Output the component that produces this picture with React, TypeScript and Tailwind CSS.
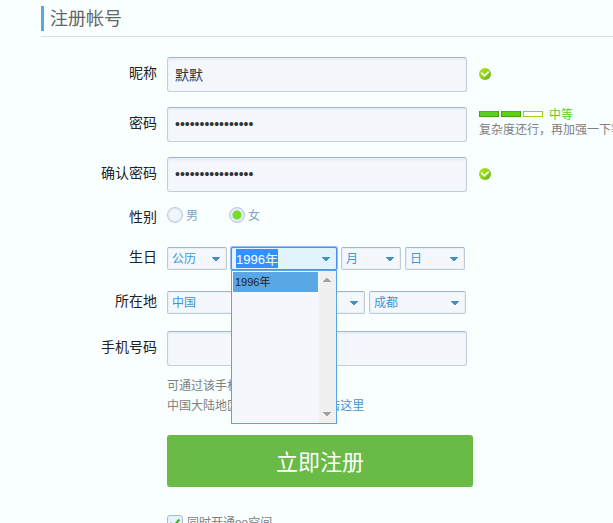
import { useEffect, useRef, useState } from "react";
import type { ReactNode } from "react";

const fieldClass =
    "h-[35px] w-[300px] shrink-0 rounded-[3px] border border-[#c0ced8] border-t-[#a3b6c6] bg-[#f4f8fd] px-[7px] pb-0.5 text-sm text-[#333] shadow-[inset_0_2px_2px_#e6edf3] outline-none";

function Row({ label, htmlFor, className, children }: { label: string; htmlFor?: string; className: string; children: ReactNode }) {
    return (
        <div className={`flex items-center ${className}`}>
            <label htmlFor={htmlFor} className="mr-2.5 w-[157px] shrink-0 pb-1 text-right text-sm leading-5 text-[#222]">{label}</label>
            {children}
        </div>
    );
}

function Caret({ className }: { className: string }) {
    return (
        <svg viewBox="0 0 8 4" className={`pointer-events-none absolute h-1 w-2 ${className}`} fill="currentColor" aria-hidden="true">
            <path d="M0 0h8v1H7v1H6v1H5v1H3V3H2V2H1V1H0z" />
        </svg>
    );
}

function Dropdown({ name, options, className }: { name: string; options: string[]; className: string }) {
    return (
        <div className={`relative h-[23px] ${className}`}>
            <select
                aria-label={name}
                className="block h-full w-full appearance-none rounded-[2px] border border-[#bccbd6] border-t-[#a3b3c6] bg-[#f4f8fd] pl-1 text-xs text-[#3f95d3] shadow-[inset_0_0_0_1px_#e9f0f5] outline-none"
            >
                {options.map((o) => <option key={o}>{o}</option>)}
            </select>
            <Caret className="right-[7px] top-2.5 text-[#3d91c8]" />
        </div>
    );
}

function YearBox() {
    const ref = useRef<HTMLInputElement>(null);
    const [year, setYear] = useState("1996年");

    useEffect(() => {
        ref.current?.focus();
        ref.current?.select();
    }, []);

    return (
        <div className="relative h-[23px] w-[106px]">
            <input
                ref={ref}
                role="combobox"
                aria-label="年"
                aria-expanded="true"
                aria-controls="year-list"
                value={year}
                onChange={(e) => setYear(e.target.value)}
                className="block h-full w-full rounded-[2px] border border-[#4b93f0] bg-[#e2f3fb] pl-1 text-[13px] text-[#3f95d3] shadow-[0_0_0_1px_#8fbcf8] outline-none selection:bg-[#3390ff] selection:text-white"
            />
            <Caret className="right-[7px] top-2.5 text-[#3d91c8]" />
            <div className="absolute left-0 top-full z-10 flex h-[154px] w-full border border-[#57a6e3] bg-[#f4f8fd]">
                <ul id="year-list" role="listbox" aria-label="年" className="grow p-px">
                    <li role="option" aria-selected="true" className="h-5 bg-[#59a7e4] pl-0.5 text-[11px] leading-5 text-[#222]">1996年</li>
                </ul>
                <div className="relative w-[17px] bg-[#f0f0f0]">
                    <Caret className="left-1 top-[7px] rotate-180 text-[#a3a3a3]" />
                    <Caret className="bottom-[7px] left-1 text-[#a3a3a3]" />
                </div>
            </div>
        </div>
    );
}

function OkIcon() {
    return (
        <svg viewBox="0 0 12 12" className="mb-0.5 ml-3 size-3 shrink-0" role="img" aria-label="通过">
            <defs>
                <linearGradient id="ok" x1="0" y1="0" x2="1" y2="1">
                    <stop offset="0" stopColor="#b8e52e" />
                    <stop offset="0.5" stopColor="#8fd40f" />
                    <stop offset="1" stopColor="#67a62c" />
                </linearGradient>
            </defs>
            <circle cx="6" cy="6" r="6" fill="url(#ok)" />
            <path d="M2.3 4.7 5.4 7.8 9.7 3.7" fill="none" stroke="#fff" strokeWidth="1.7" />
        </svg>
    );
}

function Radio({ label, checked, onChange }: { label: string; checked: boolean; onChange: () => void }) {
    return (
        <label className="flex h-4 items-center gap-[3px] text-xs leading-4 text-[#7fa5c8]">
            <input
                type="radio"
                name="gender"
                checked={checked}
                onChange={onChange}
                className="size-4 appearance-none rounded-full border border-[#b9cad7] bg-[#f0f5fb] shadow-[inset_0_0_0_1px_#dde7ee] checked:bg-[radial-gradient(circle,#76dc2a_4px,#e5eef7_5px)]"
            />
            <span className="pt-0.5">{label}</span>
        </label>
    );
}

export default function Register() {
    const [gender, setGender] = useState("女");

    return (
        <main className="h-screen overflow-hidden bg-[#f9feff] pt-1.5 font-['Liberation_Sans','Noto_Sans_CJK_SC',sans-serif]">
            <header className="ml-[41px] border-b border-[#dcdcdc] pb-[5px]">
                <h1 className="border-l-[3px] border-[#57aae1] pl-1.5 pt-px text-lg leading-6 text-[#666]">注册帐号</h1>
            </header>
            <form onSubmit={(e) => e.preventDefault()}>
                <Row label="昵称" htmlFor="nick" className="mt-5">
                    <input id="nick" type="text" defaultValue="默默" className={fieldClass} />
                    <OkIcon />
                </Row>
                <Row label="密码" htmlFor="pwd" className="mt-[15px]">
                    <input id="pwd" type="password" defaultValue="mm1996mm1996mm19" className={fieldClass} />
                    <div className="ml-3 self-start whitespace-nowrap pt-px text-xs leading-[15px]">
                        <div className="flex items-center gap-0.5 text-[#5dd021]">
                            <i className="mb-1 h-1.5 w-5 border border-[#3fa50c] border-t-[#4fb513] bg-[#5dd016]" />
                            <i className="mb-1 h-1.5 w-5 border border-[#3fa50c] border-t-[#4fb513] bg-[#5dd016]" />
                            <i className="mb-1 h-1.5 w-5 border border-[#9ad01c] bg-white" />
                            <span className="ml-1">中等</span>
                        </div>
                        <p className="text-[#808080]">复杂度还行，再加强一下等级</p>
                    </div>
                </Row>
                <Row label="确认密码" htmlFor="pwd2" className="mt-[15px]">
                    <input id="pwd2" type="password" defaultValue="mm1996mm1996mm19" className={fieldClass} />
                    <OkIcon />
                </Row>
                <Row label="性别" className="mt-[15px]">
                    <div className="flex gap-[31px] self-start">
                        <Radio label="男" checked={gender === "男"} onChange={() => setGender("男")} />
                        <Radio label="女" checked={gender === "女"} onChange={() => setGender("女")} />
                    </div>
                </Row>
                <Row label="生日" className="mt-4 h-[23px]">
                    <div className="flex gap-1">
                        <Dropdown name="历法" options={["公历", "农历"]} className="w-[60px]" />
                        <YearBox />
                        <Dropdown name="月" options={["月"]} className="w-[60px]" />
                        <Dropdown name="日" options={["日"]} className="w-[60px]" />
                    </div>
                </Row>
                <Row label="所在地" className="mt-[21px] h-[23px]">
                    <div className="flex gap-1">
                        <Dropdown name="国家" options={["中国"]} className="w-[97px]" />
                        <Dropdown name="省份" options={["四川"]} className="w-[97px]" />
                        <Dropdown name="城市" options={["成都"]} className="w-[97px]" />
                    </div>
                </Row>
                <Row label="手机号码" htmlFor="phone" className="mt-[17px]">
                    <input id="phone" type="tel" className={fieldClass} />
                </Row>
                <div className="pl-[167px]">
                    <div className="mt-2.5 text-xs leading-5 text-[#808080]">
                        <p>可通过该手机号快速找回密码</p>
                        <p>中国大陆地区以外手机号码 <a href="#phone" className="ml-0.5 text-[#3f95d3]">点击这里</a></p>
                    </div>
                    <button type="submit" className="mt-[19px] block h-[52px] w-[306px] rounded-[3px] bg-[#6aba47] pt-1 text-[22px] leading-[48px] text-white">立即注册</button>
                    <label className="mt-7 flex h-4 items-center gap-1 text-xs leading-4 text-[#808080]">
                        <span className="relative size-4">
                            <input type="checkbox" defaultChecked className="peer block size-4 appearance-none rounded-[3px] border border-[#a9bccb] bg-[#e9f1f8]" />
                            <svg viewBox="0 0 16 16" className="pointer-events-none absolute inset-0 hidden size-4 peer-checked:block" aria-hidden="true">
                                <path d="M3.5 8 6.5 11 12.5 4.5" fill="none" stroke="#35b322" strokeWidth="2" />
                            </svg>
                        </span>
                        <span>同时开通<span className="font-['Liberation_Mono',monospace] text-[11px]">QQ</span>空间</span>
                    </label>
                </div>
            </form>
        </main>
    );
}
